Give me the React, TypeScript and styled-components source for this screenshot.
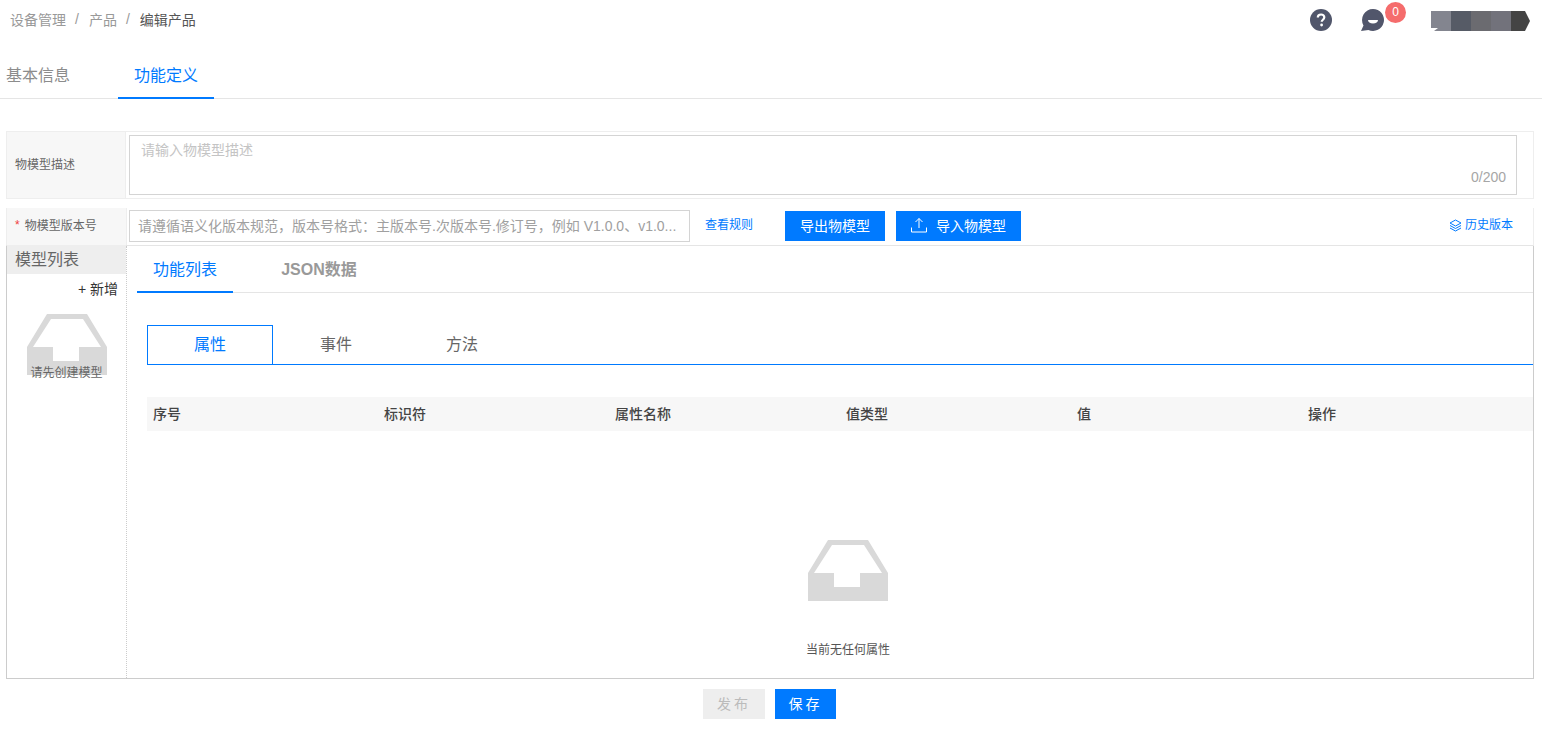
import styled, { createGlobalStyle } from "styled-components";

const Global = createGlobalStyle`
  html, body {
    margin: 0;
    padding: 0;
    background: #fff;
  }
  body {
    font-family: "Liberation Sans", "Noto Sans CJK SC", sans-serif;
    color: #333;
  }
  * {
    box-sizing: border-box;
  }
`;

const blue = "#007aff";

const Page = styled.div`
  width: 1542px;
  height: 739px;
  overflow: hidden;
`;

const Header = styled.header`
  height: 40px;
  display: flex;
  align-items: center;
  justify-content: space-between;
  padding-left: 10px;
`;

const Crumbs = styled.div`
  display: flex;
  align-items: center;
  margin-top: -2px;
  font-size: 14px;
  color: #999;
`;

const Slash = styled.span`
  margin: 0 10px 0 9px;
  color: #999;
`;

const CrumbNow = styled.span`
  color: #555;
`;

const HeaderIcons = styled.div`
  display: flex;
  align-items: center;
  padding-right: 11px;
`;

const HelpIcon = styled.svg`
  width: 22px;
  height: 22px;
  display: block;
`;

const MsgWrap = styled.div`
  position: relative;
  width: 24px;
  height: 24px;
  margin-left: 29px;
  margin-right: 46px;
`;

const Badge = styled.span`
  position: absolute;
  left: 24px;
  top: -6px;
  width: 21px;
  height: 21px;
  border-radius: 50%;
  background: #f56c6c;
  color: #fff;
  font-size: 12px;
  line-height: 21px;
  text-align: center;
`;

const TopTabs = styled.nav`
  height: 59px;
  padding-top: 10px;
  display: flex;
  border-bottom: 1px solid #e5e5e5;
`;

const TopTab = styled.div<{ $active?: boolean }>`
  width: ${(p) => (p.$active ? "96px" : "64px")};
  margin-left: ${(p) => (p.$active ? "48px" : "6px")};
  height: 49px;
  line-height: 52px;
  text-align: center;
  font-size: 16px;
  color: ${(p) => (p.$active ? blue : "#8c8c8c")};
  border-bottom: ${(p) => (p.$active ? `2px solid ${blue}` : "none")};
`;

const Form = styled.div`
  margin: 32px 8px 0 6px;
`;

const DescRow = styled.div`
  height: 68px;
  display: flex;
  border: 1px solid #eee;
`;

const Label = styled.div`
  width: 119px;
  flex: none;
  display: flex;
  align-items: center;
  padding: 0 0 4px 8px;
  background: #f7f7f7;
  border-right: 1px solid #eee;
  font-size: 12px;
  color: #666;
`;

const Star = styled.span`
  color: #f04040;
  margin-right: 5px;
`;

const DescBox = styled.div`
  position: relative;
  width: 1388px;
  height: 60px;
  margin: 3px 0 0 3px;
  border: 1px solid #d4d4d4;
  padding: 5px 11px;
  font-size: 14px;
  line-height: 18px;
  color: #c4c4c4;
`;

const Counter = styled.span`
  position: absolute;
  right: 10px;
  bottom: 10px;
  font-size: 14px;
  line-height: 14px;
  color: #a6a6a6;
`;

const VersionRow = styled.div`
  height: 38px;
  margin-top: 9px;
  display: flex;
  border-right: 1px solid #eee;
  border-bottom: 1px solid #e5e5e5;
`;

const VersionLabel = styled(Label)`
  width: 121px;
  border-left: 1px solid #eee;
`;

const VersionInput = styled.div`
  width: 561px;
  height: 32px;
  margin: 2px 0 0 2px;
  border: 1px solid #d4d4d4;
  padding: 0 8px;
  font-size: 14px;
  line-height: 31px;
  color: #a0a0a0;
  white-space: nowrap;
  overflow: hidden;
`;

const RuleLink = styled.span`
  margin: 9px 32px 0 15px;
  font-size: 12px;
  line-height: 16px;
  color: ${blue};
`;

const Button = styled.div<{ $w: number; $off?: boolean }>`
  width: ${(p) => p.$w}px;
  height: 30px;
  padding-bottom: 3px;
  display: flex;
  align-items: center;
  justify-content: center;
  font-size: 14px;
  background: ${(p) => (p.$off ? "#eee" : blue)};
  color: ${(p) => (p.$off ? "#bbb" : "#fff")};
`;

const VersionBtn = styled(Button)`
  margin: 3px 11px 0 0;
`;

const UploadIcon = styled.svg`
  width: 16px;
  height: 16px;
  margin: 1px 9px 0 0;
`;

const History = styled.span`
  align-self: flex-start;
  margin: 9px 20px 0 auto;
  display: flex;
  align-items: center;
  font-size: 12px;
  line-height: 16px;
  color: ${blue};
`;

const LayersIcon = styled.svg`
  width: 13px;
  height: 13px;
  margin-right: 3px;
`;

const Panel = styled.div`
  height: 433px;
  display: flex;
  border: 1px solid #ccc;
  border-top: none;
`;

const Side = styled.aside`
  width: 120px;
  flex: none;
  border-right: 1px dotted #ccc;
`;

const SideTitle = styled.div`
  height: 29px;
  margin-top: -1px;
  background: #eee;
  padding-left: 8px;
  font-size: 16px;
  line-height: 29px;
  color: #666;
`;

const AddLink = styled.div`
  margin-top: 5px;
  padding-right: 8px;
  text-align: right;
  font-size: 14px;
  line-height: 20px;
  color: #333;
`;

const SideEmpty = styled.div`
  margin-top: 15px;
  display: flex;
  flex-direction: column;
  align-items: center;
`;

const TrayIcon = styled.svg`
  width: 80px;
  height: 61px;
  display: block;
`;

const SideEmptyText = styled.div`
  margin-top: -10px;
  font-size: 12px;
  line-height: 16px;
  color: #666;
`;

const Main = styled.main`
  flex: 1;
  min-width: 0;
`;

const InnerTabs = styled.div`
  height: 47px;
  margin-left: 10px;
  display: flex;
  border-bottom: 1px solid #e5e5e5;
`;

const InnerTab = styled.div<{ $active?: boolean }>`
  width: 96px;
  height: 47px;
  margin-right: ${(p) => (p.$active ? "38px" : "0")};
  line-height: 47px;
  text-align: center;
  font-size: 16px;
  font-weight: ${(p) => (p.$active ? 400 : 700)};
  color: ${(p) => (p.$active ? blue : "#999")};
  border-bottom: ${(p) => (p.$active ? `2px solid ${blue}` : "none")};
`;

const Content = styled.div`
  padding: 32px 0 0 20px;
`;

const TypeTabs = styled.div`
  height: 40px;
  display: flex;
  border-bottom: 1px solid ${blue};
`;

const TypeTab = styled.div<{ $active?: boolean }>`
  width: 126px;
  height: ${(p) => (p.$active ? "40px" : "39px")};
  line-height: ${(p) => (p.$active ? "38px" : "39px")};
  text-align: center;
  font-size: 16px;
  color: ${(p) => (p.$active ? blue : "#666")};
  border: ${(p) => (p.$active ? `1px solid ${blue}` : "none")};
`;

const TableHead = styled.div`
  height: 34px;
  margin-top: 32px;
  display: grid;
  grid-template-columns: repeat(6, 231px);
  background: #f7f7f7;
`;

const HeadCell = styled.div`
  padding-left: 6px;
  font-size: 14px;
  font-weight: 500;
  line-height: 34px;
  color: #444;
`;

const TableEmpty = styled.div`
  margin-top: 109px;
  display: flex;
  flex-direction: column;
  align-items: center;
  padding-left: 16px;
`;

const EmptyText = styled.div`
  margin-top: 41px;
  font-size: 12px;
  line-height: 16px;
  color: #555;
`;

const Footer = styled.footer`
  margin-top: 10px;
  padding-right: 1px;
  display: flex;
  justify-content: center;
  gap: 10px;
`;

const FootBtn = styled(Button)`
  letter-spacing: 3px;
`;

const Tray = () => (
  <TrayIcon viewBox="0 0 80 61">
    <path
      fill="#d9d9d9"
      d="M20 0h40l20 33v28H0V33L20 0zm4 5L6 33h20v14h26V33h22L56 5H24z"
    />
  </TrayIcon>
);

const columns = ["序号", "标识符", "属性名称", "值类型", "值", "操作"];

const App = () => {
  return (
    <Page>
      <Global />
      <Header>
        <Crumbs>
          <span>设备管理</span>
          <Slash>/</Slash>
          <span>产品</span>
          <Slash>/</Slash>
          <CrumbNow>编辑产品</CrumbNow>
        </Crumbs>
        <HeaderIcons>
          <HelpIcon viewBox="0 0 22 22">
            <circle cx="11" cy="11" r="11" fill="#51566b" />
            <path
              d="M7.8 8.6c0-2 1.4-3.1 3.3-3.1s3.2 1.1 3.2 2.8c0 2.400-2.600 2.400-2.600 4.400"
              fill="none"
              stroke="#fff"
              strokeWidth="2.200"
            />
            <circle cx="11.600" cy="16" r="1.400" fill="#fff" />
          </HelpIcon>
          <MsgWrap>
            <svg width="24" height="24" viewBox="0 0 24 24">
              <path
                d="M12 1a11 11 0 1 1-4.600 21L0 23l2.500-5.500A11 11 0 0 1 12 1z"
                fill="#51566b"
              />
              <path d="M7 12h10c0 2-2 3.500-5 3.500S7 14 7 12z" fill="#fff" />
            </svg>
            <Badge>0</Badge>
          </MsgWrap>
          <svg width="100" height="21" viewBox="0 0 100 21">
            <rect x="0" y="1" width="20" height="20" fill="#83858f" />
            <rect x="20" y="1" width="20" height="20" fill="#565b66" />
            <rect x="40" y="1" width="20" height="20" fill="#6b6b70" />
            <rect x="60" y="1" width="20" height="20" fill="#72727b" />
            <path d="M80 1h14l5 10-5 10H80z" fill="#444" />
            <path d="M0 21v-3h7l-4 3z" fill="#fff" />
          </svg>
        </HeaderIcons>
      </Header>
      <TopTabs>
        <TopTab>基本信息</TopTab>
        <TopTab $active>功能定义</TopTab>
      </TopTabs>
      <Form>
        <DescRow>
          <Label>物模型描述</Label>
          <DescBox>
            请输入物模型描述
            <Counter>0/200</Counter>
          </DescBox>
        </DescRow>
        <VersionRow>
          <VersionLabel>
            <Star>*</Star>物模型版本号
          </VersionLabel>
          <VersionInput>
            请遵循语义化版本规范，版本号格式：主版本号.次版本号.修订号，例如 V1.0.0、v1.0...
          </VersionInput>
          <RuleLink>查看规则</RuleLink>
          <VersionBtn $w={100}>导出物模型</VersionBtn>
          <VersionBtn $w={125}>
            <UploadIcon viewBox="0 0 16 16" fill="none" stroke="#fff" strokeWidth="1">
              <path d="M8 11V1.500M4.500 5 8 1.500 11.500 5M.5 10.500v4.500h15v-4.500" />
            </UploadIcon>
            导入物模型
          </VersionBtn>
          <History>
            <LayersIcon viewBox="0 0 13 13" fill="none" stroke={blue} strokeWidth="1">
              <path d="M6.500 1 12 4 6.500 7 1 4zM1 6.500l5.500 3 5.500-3M1 9l5.500 3L12 9" />
            </LayersIcon>
            历史版本
          </History>
        </VersionRow>
        <Panel>
          <Side>
            <SideTitle>模型列表</SideTitle>
            <AddLink>+ 新增</AddLink>
            <SideEmpty>
              <Tray />
              <SideEmptyText>请先创建模型</SideEmptyText>
            </SideEmpty>
          </Side>
          <Main>
            <InnerTabs>
              <InnerTab $active>功能列表</InnerTab>
              <InnerTab>JSON数据</InnerTab>
            </InnerTabs>
            <Content>
              <TypeTabs>
                <TypeTab $active>属性</TypeTab>
                <TypeTab>事件</TypeTab>
                <TypeTab>方法</TypeTab>
              </TypeTabs>
              <TableHead>
                {columns.map((c) => (
                  <HeadCell key={c}>{c}</HeadCell>
                ))}
              </TableHead>
              <TableEmpty>
                <Tray />
                <EmptyText>当前无任何属性</EmptyText>
              </TableEmpty>
            </Content>
          </Main>
        </Panel>
        <Footer>
          <FootBtn $w={62} $off>
            发布
          </FootBtn>
          <FootBtn $w={61}>保存</FootBtn>
        </Footer>
      </Form>
    </Page>
  );
};

export default App;
